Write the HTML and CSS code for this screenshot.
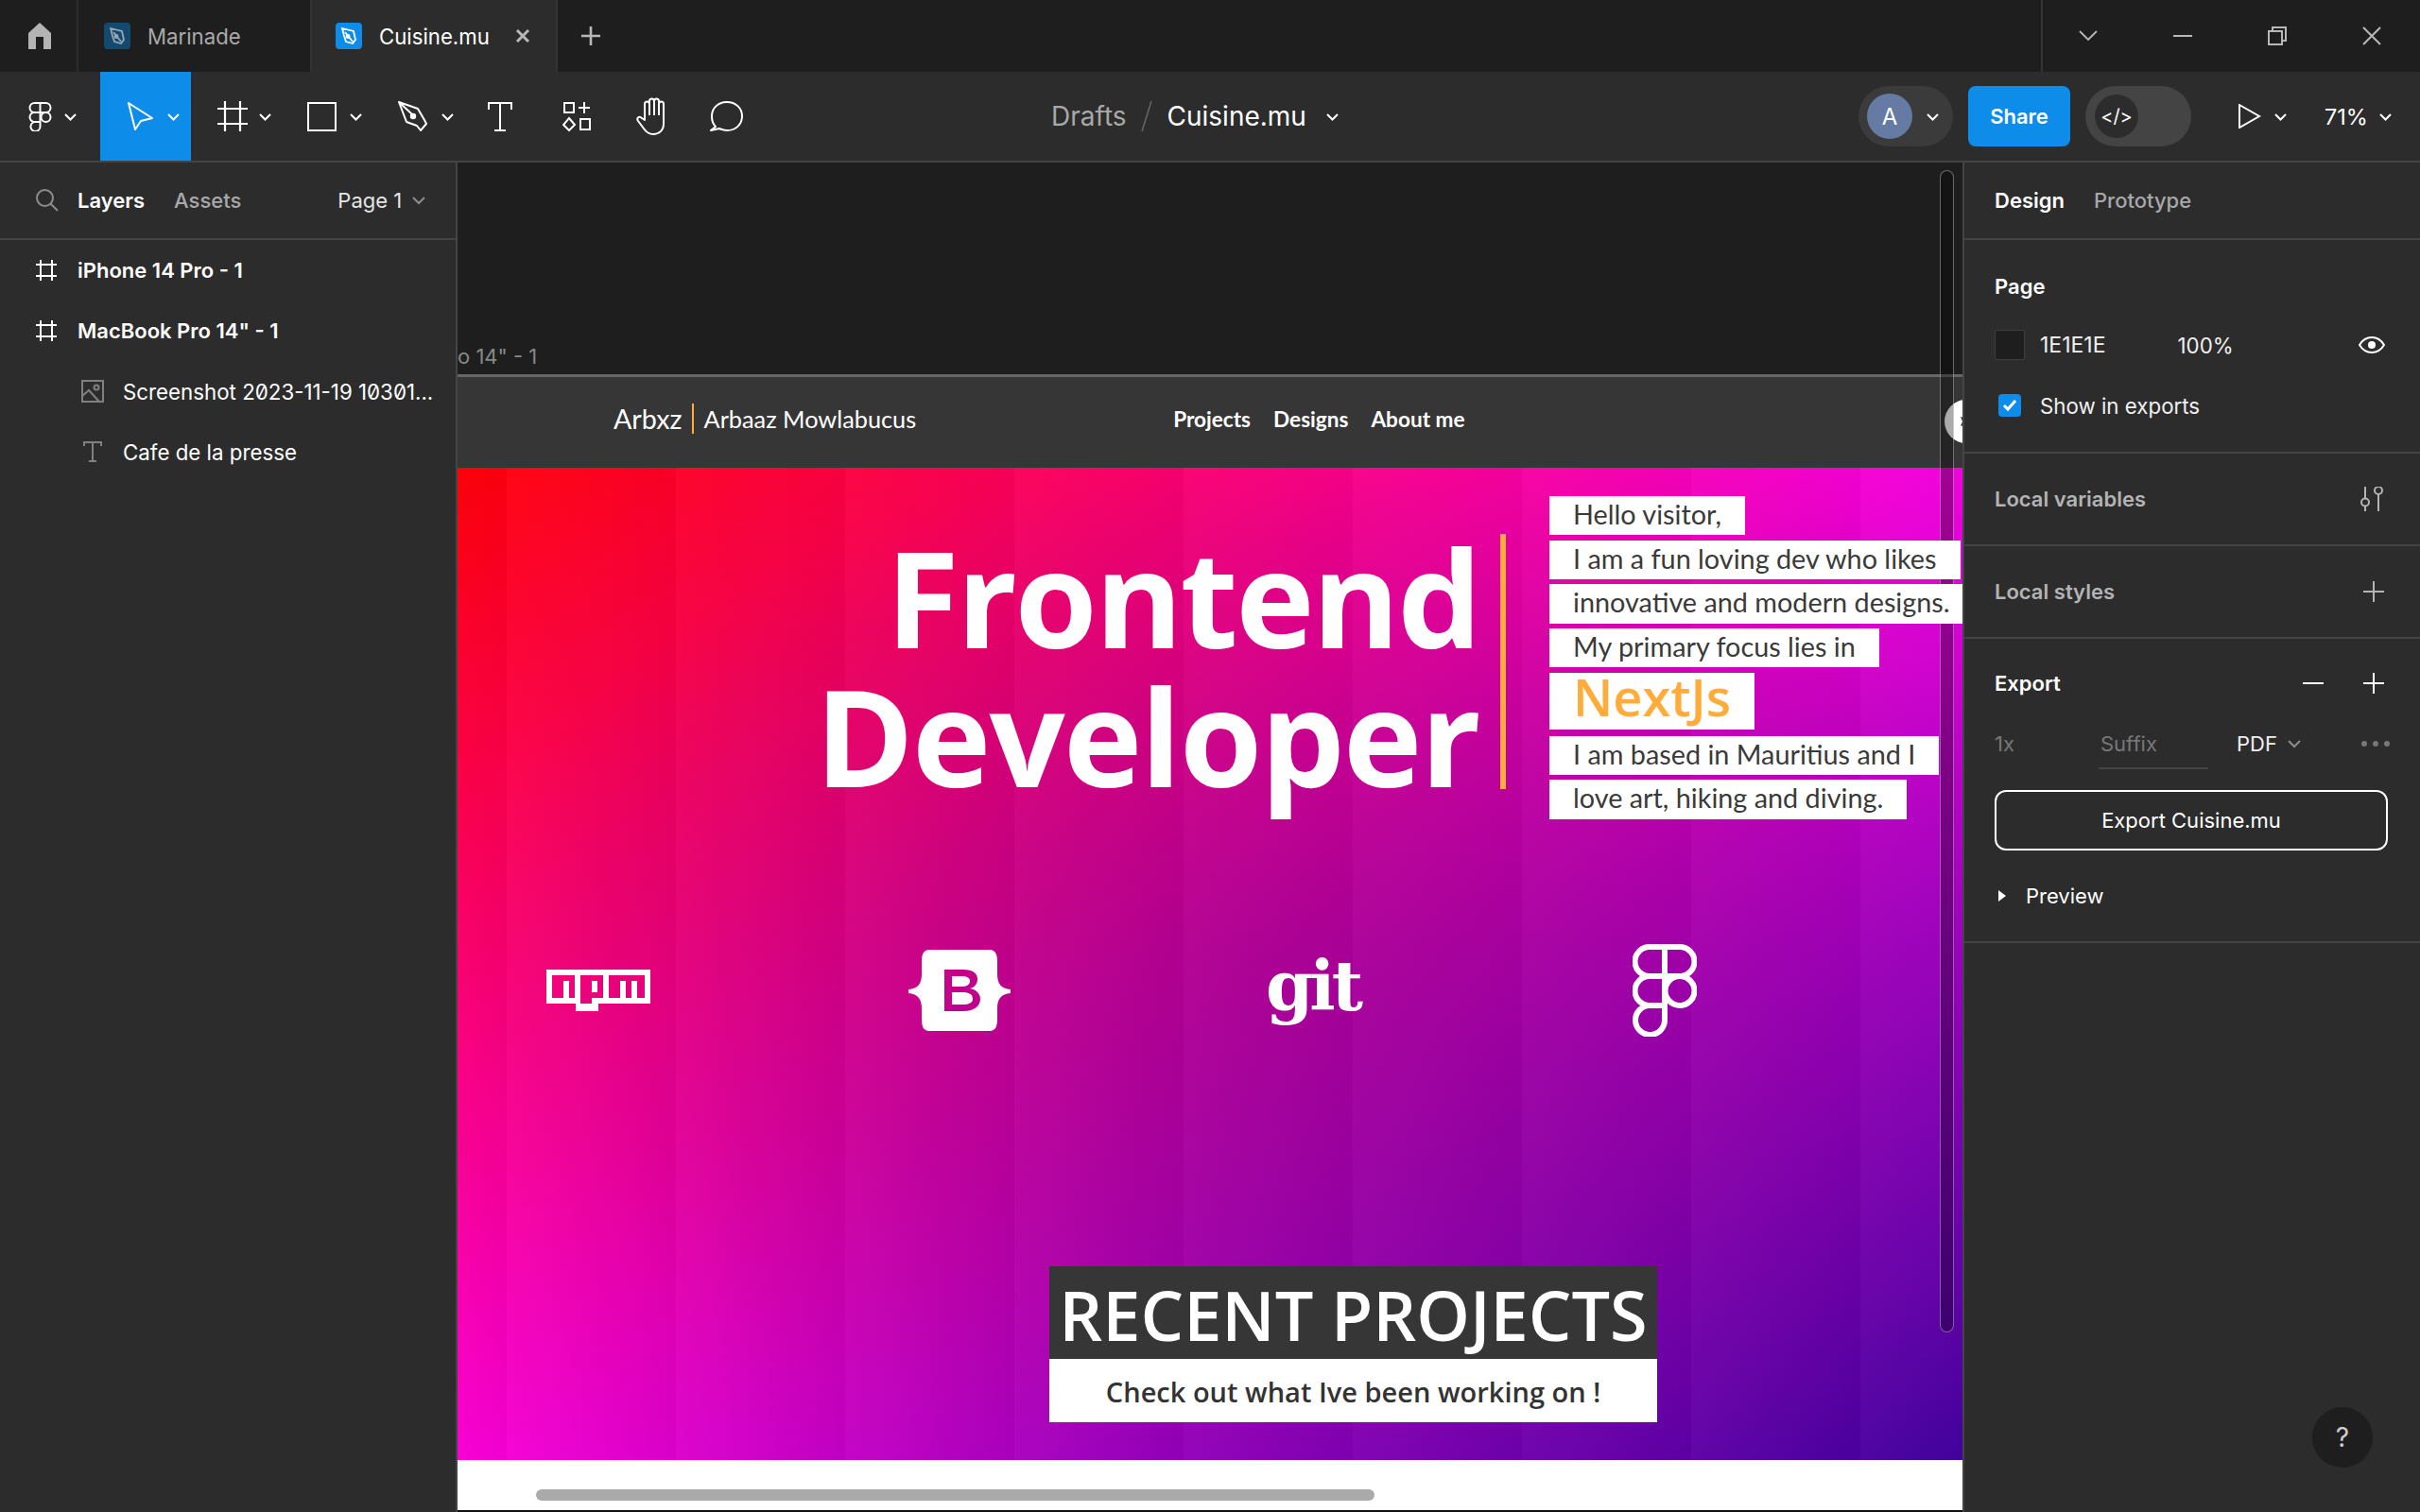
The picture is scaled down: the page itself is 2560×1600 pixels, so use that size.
FILE: index.html
```html
<!DOCTYPE html>
<html lang="en">
<head>
<meta charset="utf-8">
<title>Cuisine.mu</title>
<link rel="stylesheet" href="styles.css">
</head>
<body>
<div class="app">
  <header class="tabbar">
    <div class="home">
      <svg class="i" width="24" height="28" viewBox="0 0 24 28"><path d="M12 0 24 11V28H16V15H8V28H0V11Z" fill="#b4b4b4"/></svg>
    </div>
    <div class="tab tab-off">
      <span class="fileicon off"><svg width="28" height="28" viewBox="0 0 28 28"><path d="M7 6 19 9l2 9-3 4-7-2-2-6zM10 10l8 10M13 13a1.5 1.5 0 1 0 .1 0" fill="none" stroke="#9aa7b0" stroke-width="1.8"/></svg></span>
      <span class="tabname">Marinade</span>
    </div>
    <div class="tab tab-on">
      <span class="fileicon on"><svg width="28" height="28" viewBox="0 0 28 28"><path d="M7 6 19 9l2 9-3 4-7-2-2-6zM10 10l8 10M13 13a1.5 1.5 0 1 0 .1 0" fill="none" stroke="#fff" stroke-width="1.8"/></svg></span>
      <span class="tabname">Cuisine.mu</span>
      <svg class="tabx" width="16" height="16" viewBox="0 0 16 16"><path d="M2 2 14 14M14 2 2 14" stroke="#b8b8b8" stroke-width="3"/></svg>
    </div>
    <svg class="tabplus" width="20" height="20" viewBox="0 0 20 20"><path d="M10 0V20M0 10H20" stroke="#b8b8b8" stroke-width="2.6"/></svg>
    <div class="winbtns">
      <svg width="20" height="12" viewBox="0 0 20 12"><path d="M1 1 10 10 19 1" fill="none" stroke="#b8b8b8" stroke-width="1.8"/></svg>
      <svg width="20" height="4" viewBox="0 0 20 4"><path d="M0 2H20" stroke="#b8b8b8" stroke-width="2"/></svg>
      <svg width="20" height="20" viewBox="0 0 20 20"><path d="M5 4V1H19V15H15M1 5H15V19H1Z" fill="none" stroke="#b8b8b8" stroke-width="2"/></svg>
      <svg width="20" height="20" viewBox="0 0 20 20"><path d="M1 1 19 19M19 1 1 19" stroke="#b8b8b8" stroke-width="2"/></svg>
    </div>
  </header>

  <nav class="toolbar">
    <div class="tools">
      <div class="tool t-logo">
        <svg width="25" height="31" viewBox="0 0 25 31" fill="none" stroke="#fff" stroke-width="2"><path d="M12.5 1H6.5a5 5 0 0 0 0 10h6ZM12.5 1h6a5 5 0 0 1 0 10h-6ZM12.5 11H6.5a5 5 0 0 0 0 10h6ZM12.5 21H6.5a5 5 0 1 0 6 5Z"/><circle cx="18.5" cy="16" r="5"/></svg>
        <svg class="chev" width="13" height="8" viewBox="0 0 13 8"><path d="M1 1l5.500 5.500L12 1" fill="none" stroke="#fff" stroke-width="2"/></svg>
      </div>
      <div class="tool t-move">
        <svg width="27" height="30" viewBox="0 0 27 30"><path d="M1 1 26 17 14 20 8 29Z" fill="none" stroke="#fff" stroke-width="2" stroke-linejoin="round"/></svg>
        <svg class="chev" width="13" height="8" viewBox="0 0 13 8"><path d="M1 1l5.500 5.500L12 1" fill="none" stroke="#fff" stroke-width="2"/></svg>
      </div>
      <div class="tool t-frame">
        <svg width="32" height="32" viewBox="0 0 32 32"><path d="M8 0V32M24 0V32M0 8H32M0 24H32" stroke="#fff" stroke-width="2.200"/></svg>
        <svg class="chev" width="13" height="8" viewBox="0 0 13 8"><path d="M1 1l5.500 5.500L12 1" fill="none" stroke="#fff" stroke-width="2"/></svg>
      </div>
      <div class="tool t-rect">
        <svg width="31" height="31" viewBox="0 0 31 31"><rect x="1" y="1" width="29" height="29" fill="none" stroke="#fff" stroke-width="2"/></svg>
        <svg class="chev" width="13" height="8" viewBox="0 0 13 8"><path d="M1 1l5.500 5.500L12 1" fill="none" stroke="#fff" stroke-width="2"/></svg>
      </div>
      <div class="tool t-pen">
        <svg width="32" height="32" viewBox="0 0 32 32" fill="none" stroke="#fff" stroke-width="2" stroke-linejoin="round"><path d="M1 1 21 8 28 20 30 24 24 31 20 26 9 22ZM1 1 15 14"/><circle cx="16" cy="16" r="2.200" fill="#fff"/></svg>
        <svg class="chev" width="13" height="8" viewBox="0 0 13 8"><path d="M1 1l5.500 5.500L12 1" fill="none" stroke="#fff" stroke-width="2"/></svg>
      </div>
      <div class="tool t-solo">
        <svg width="26" height="31" viewBox="0 0 26 31"><path d="M1 8V1H25V8M13 1V30M7 30H19" fill="none" stroke="#fff" stroke-width="2"/></svg>
      </div>
      <div class="tool t-solo t-comp">
        <svg width="30" height="31" viewBox="0 0 30 31" fill="none" stroke="#fff" stroke-width="2"><rect x="2" y="1" width="10" height="10"/><path d="M23 0V12M17 6H29"/><path d="M7 17 13 24 7 30 1 24Z"/><rect x="19" y="18" width="10" height="11"/></svg>
      </div>
      <div class="tool t-solo t-hand">
        <svg width="34" height="40" viewBox="0 0 34 40"><path d="M9 24V7a2.500 2.500 0 0 1 5 0V4a2.500 2.500 0 0 1 5 0V4a2.500 2.500 0 0 1 5 0v3a2.500 2.500 0 0 1 5 0V28c0 7-5 11-11 11-5 0-8-3-10-6L2 25c-2-3 1-6 4-3Z M14 6V19M19 4V19M24 6V19" fill="none" stroke="#fff" stroke-width="2" stroke-linejoin="round"/></svg>
      </div>
      <div class="tool t-solo t-comment">
        <svg width="35" height="32" viewBox="0 0 35 32"><path d="M6 27C3 24 2 20 2 16 2 7 9 1 18 1s16 6 16 15-7 15-16 15c-3 0-6-1-8-2L1 31Z" fill="none" stroke="#fff" stroke-width="2" stroke-linejoin="round"/></svg>
      </div>
    </div>
    <div class="crumbs">
      <span class="crumb-dim">Drafts</span>
      <svg class="slash" width="12" height="32" viewBox="0 0 12 32"><path d="M11 0 1 32" stroke="#666" stroke-width="1.500"/></svg>
      <span class="crumb-file">Cuisine.mu</span>
      <svg class="chev" width="13" height="8" viewBox="0 0 13 8"><path d="M1 1l5.500 5.500L12 1" fill="none" stroke="#fff" stroke-width="2"/></svg>
    </div>
    <div class="actions">
      <div class="pill pill-user">
        <span class="avatar">A</span>
        <svg class="chev" width="13" height="8" viewBox="0 0 13 8"><path d="M1 1l5.500 5.500L12 1" fill="none" stroke="#fff" stroke-width="2"/></svg>
      </div>
      <button class="share">Share</button>
      <div class="pill pill-code"><span class="codeknob">&lt;/&gt;</span></div>
      <svg class="play" width="24" height="26" viewBox="0 0 24 26"><path d="M1 1 22 13 1 25Z" fill="none" stroke="#fff" stroke-width="2"/></svg>
      <svg class="chev" width="13" height="8" viewBox="0 0 13 8"><path d="M1 1l5.500 5.500L12 1" fill="none" stroke="#fff" stroke-width="2"/></svg>
      <span class="zoomval">71%</span>
      <svg class="chev" width="13" height="8" viewBox="0 0 13 8"><path d="M1 1l5.500 5.500L12 1" fill="none" stroke="#fff" stroke-width="2"/></svg>
    </div>
  </nav>

  <div class="workspace">
    <aside class="left">
      <div class="panelhead">
        <svg class="search" width="24" height="24" viewBox="0 0 24 24" fill="none" stroke="#8c8c8c" stroke-width="2"><circle cx="9.500" cy="9.500" r="8.500"/><path d="M15.500 15.500 23 23"/></svg>
        <span class="ltab ltab-on">Layers</span>
        <span class="ltab ltab-off">Assets</span>
        <span class="pagesel">Page 1</span>
        <svg class="pagechev" width="14" height="9" viewBox="0 0 14 9"><path d="M1 1l6 6 6-6" fill="none" stroke="#8c8c8c" stroke-width="2"/></svg>
      </div>
      <ul class="layers">
        <li class="layer frame-row">
          <svg width="24" height="24" viewBox="0 0 24 24"><path d="M6 1V23M18 1V23M1 6H23M1 18H23" stroke="#fff" stroke-width="2"/></svg>
          <span>iPhone 14 Pro - 1</span>
        </li>
        <li class="layer frame-row">
          <svg width="24" height="24" viewBox="0 0 24 24"><path d="M6 1V23M18 1V23M1 6H23M1 18H23" stroke="#fff" stroke-width="2"/></svg>
          <span>MacBook Pro 14" - 1</span>
        </li>
        <li class="layer child-row">
          <svg width="24" height="24" viewBox="0 0 24 24" fill="none" stroke="#808080" stroke-width="2"><rect x="1" y="1" width="22" height="22"/><circle cx="16" cy="8" r="2.500"/><path d="M1 17 8 11 19 23"/></svg>
          <span>Screenshot 2023-11-19 10301...</span>
        </li>
        <li class="layer child-row">
          <svg width="24" height="24" viewBox="0 0 24 24"><path d="M3 6V2H21V6M12 2V22M8 22H16" fill="none" stroke="#808080" stroke-width="2"/></svg>
          <span>Cafe de la presse</span>
        </li>
      </ul>
    </aside>

    <main class="canvas">
      <div class="framelabel">o 14" - 1</div>
      <div class="frame">
        <div class="sitenav">
          <div class="brand"><span class="brand-a">Arbxz</span><span class="brand-name">Arbaaz Mowlabucus</span></div>
          <div class="sitelinks"><span>Projects</span><span>Designs</span><span>About me</span></div>
          <div class="siteavatar">
            <svg width="12" height="16" viewBox="0 0 12 16"><path d="M6 0 8 4 12 3 10 8 12 13 8 12 6 16 4 12 0 13 2 8 0 3 4 4Z" fill="#333"/></svg>
          </div>
        </div>
        <section class="hero">
          <div class="herotop">
            <h1 class="headline"><span class="line-a">Frontend</span><span class="line-b">Developer</span></h1>
            <div class="herobar"></div>
            <div class="intro">
              <p>Hello visitor,</p>
              <p>I am a fun loving dev who likes</p>
              <p>innovative and modern designs.</p>
              <p>My primary focus lies in</p>
              <p class="next">NextJs</p>
              <p>I am based in Mauritius and I</p>
              <p>love art, hiking and diving.</p>
            </div>
          </div>
          <div class="logos">
            <svg width="110" height="44" viewBox="0 0 110 44"><path fill="#fff" fill-rule="evenodd" d="M0 0H110V36H55V44H31V36H0ZM6 6V30H18V12H24V30H30V6ZM36 6V36H48V30H60V6ZM48 12H54V24H48ZM66 6V30H78V12H84V30H90V12H96V30H104V6Z"/></svg>
            <svg width="108" height="86" viewBox="0 0 108 86"><path fill="#fff" fill-rule="evenodd" d="M22 0H86C92 0 94 5 94 12V26C94 36 98 41 108 42V46C98 47 94 52 94 62V74C94 81 92 86 86 86H22C16 86 14 81 14 74V62C14 52 10 47 0 46V42C10 41 14 36 14 26V12C14 5 16 0 22 0ZM38 21V65H58C70 65 76 59 76 52 76 46 71 42 65 41 70 40 73 36 73 31 73 25 68 21 58 21ZM46 28H56C62 28 65 30 65 33 65 37 62 39 55 39H46ZM46 45H57C64 45 68 47 68 52 68 56 64 58 57 58H46Z"/></svg>
            <span class="gitlogo">git</span>
            <svg width="68" height="98" viewBox="0 0 68 98" fill="none" stroke="#fff" stroke-width="6"><path d="M34 3H18a15.500 15.500 0 0 0 0 31H34ZM34 3H50a15.500 15.500 0 0 1 0 31H34ZM34 34H18a15.500 15.500 0 0 0 0 31H34ZM34 65H18A15.500 15.500 0 1 0 34 80Z"/><circle cx="50" cy="49.500" r="15.500"/></svg>
          </div>
          <div class="recent">
            <h2 class="recent-title">RECENT PROJECTS</h2>
            <p class="recent-sub">Check out what Ive been working on !</p>
          </div>
        </section>
        <div class="framebottom"><div class="hscroll"></div></div>
      </div>
      <div class="vscroll"></div>
    </main>

    <aside class="right">
      <div class="panelhead rhead">
        <span class="ltab ltab-on">Design</span>
        <span class="ltab ltab-off">Prototype</span>
      </div>
      <section class="rsec sec-page">
        <h3 class="sectitle">Page</h3>
        <div class="prow">
          <span class="swatch"></span>
          <span class="hex">1E1E1E</span>
          <span class="pct">100%</span>
          <svg class="eye" width="28" height="18" viewBox="0 0 28 18"><path d="M1 9C4 4 9 1 14 1s10 3 13 8c-3 5-8 8-13 8S4 14 1 9Z" fill="none" stroke="#fff" stroke-width="2"/><circle cx="14" cy="9" r="4" fill="#fff"/></svg>
        </div>
        <div class="prow">
          <span class="check"><svg width="16" height="14" viewBox="0 0 16 14"><path d="M2 7 6 11 14 2" fill="none" stroke="#fff" stroke-width="3"/></svg></span>
          <span class="showlabel">Show in exports</span>
        </div>
      </section>
      <section class="rsec sec-row">
        <h3 class="sectitle dim">Local variables</h3>
        <svg width="26" height="26" viewBox="0 0 26 26" fill="none" stroke="#b4b4b4" stroke-width="2"><path d="M6 0V12M6 21V26M20 8V26"/><circle cx="6" cy="16.500" r="4"/><circle cx="20" cy="4" r="4"/></svg>
      </section>
      <section class="rsec sec-row">
        <h3 class="sectitle dim">Local styles</h3>
        <svg width="22" height="22" viewBox="0 0 22 22"><path d="M11 0V22M0 11H22" stroke="#b4b4b4" stroke-width="2"/></svg>
      </section>
      <section class="rsec sec-export">
        <div class="exporthead">
          <h3 class="sectitle">Export</h3>
          <svg class="minus" width="22" height="22" viewBox="0 0 22 22"><path d="M0 11H22" stroke="#fff" stroke-width="2"/></svg>
          <svg width="22" height="22" viewBox="0 0 22 22"><path d="M11 0V22M0 11H22" stroke="#fff" stroke-width="2"/></svg>
        </div>
        <div class="exportrow">
          <span class="ex-scale">1x</span>
          <span class="ex-suffix">Suffix</span>
          <span class="ex-format">PDF</span>
          <svg class="pagechev" width="14" height="9" viewBox="0 0 14 9"><path d="M1 1l6 6 6-6" fill="none" stroke="#8c8c8c" stroke-width="2"/></svg>
          <svg class="dots" width="30" height="6" viewBox="0 0 30 6"><circle cx="3" cy="3" r="3" fill="#777"/><circle cx="15" cy="3" r="3" fill="#777"/><circle cx="27" cy="3" r="3" fill="#777"/></svg>
        </div>
        <button class="exportbtn">Export Cuisine.mu</button>
        <div class="preview">
          <svg width="8" height="12" viewBox="0 0 8 12"><path d="M0 0 8 6 0 12Z" fill="#fff"/></svg>
          <span>Preview</span>
        </div>
      </section>
      <div class="help">?</div>
    </aside>
  </div>
</div>
</body>
</html>
```
FILE: styles.css
```css
* { box-sizing: border-box; margin: 0; padding: 0; }
html, body { width: 2560px; height: 1600px; overflow: hidden; background: #1e1e1e; }
body { font-family: Inter, "Noto Sans", sans-serif; color: #fff; font-size: 22px; }
svg { display: block; flex: none; }
.app { width: 2560px; height: 1600px; display: flex; flex-direction: column; }

/* tab bar */
.tabbar { height: 76px; background: #1e1e1e; display: flex; align-items: stretch; }
.home { width: 83px; display: flex; align-items: center; padding-left: 30px; border-right: 2px solid #2c2c2c; }
.tab { display: flex; align-items: center; font-size: 22.200px; }
.tab-off { width: 245px; padding-left: 27px; color: #aaa; }
.tab-on { width: 262px; padding-left: 25px; background: #2c2c2c; border-left: 2px solid #333; border-right: 2px solid #333; }
.fileicon { width: 28px; height: 28px; border-radius: 4px; margin-right: 18px; }
.fileicon.off { background: #134a70; }
.fileicon.on { background: #0d8ce9; }
.tabx { margin-left: 27px; }
.tabplus { align-self: center; margin-left: 25px; }
.winbtns { margin-left: auto; width: 401px; border-left: 2px solid #333; display: flex; align-items: center; gap: 80px; padding-left: 38px; }

/* toolbar */
.toolbar { height: 96px; background: #2c2c2c; border-bottom: 2px solid #444; display: flex; align-items: stretch; }
.tools { display: flex; width: 1112px; align-items: stretch; }
.tool { display: flex; align-items: center; }
.t-logo { width: 106px; padding-left: 30px; gap: 13px; }
.t-move { width: 96px; padding-left: 29px; gap: 15px; background: #0d8ce9; }
.t-frame { width: 98px; padding-left: 28px; gap: 12px; }
.t-rect { width: 98px; padding-left: 25px; gap: 14px; }
.t-pen { width: 91px; padding-left: 23px; gap: 14px; }
.t-solo { width: 80px; justify-content: center; }
.t-comp { margin-left: 1px; }
.t-comment { margin-left: -2px; }
.chev { margin-top: 2px; }
.crumbs { width: 854px; display: flex; align-items: center; font-size: 28px; }
.crumb-dim { color: #a8a8a8; }
.slash { margin: 0 16px 0 15px; }
.crumb-file { margin-right: 21px; }
.actions { display: flex; align-items: center; }
.pill { height: 64px; border-radius: 32px; display: flex; align-items: center; }
.pill-user { width: 100px; background: #3b3b3b; padding-left: 9px; gap: 15px; }
.avatar { width: 48px; height: 48px; border-radius: 50%; background: #667ba3; display: flex; align-items: center; justify-content: center; font-size: 24px; }
.share { width: 108px; height: 64px; border: 0; border-radius: 8px; background: #0d8ce9; color: #fff; font: 600 22px Inter, sans-serif; margin-left: 16px; }
.pill-code { width: 112px; background: #444; margin-left: 16px; padding-left: 10px; }
.codeknob { width: 46px; height: 46px; border-radius: 50%; background: #2c2c2c; display: flex; align-items: center; justify-content: center; font-size: 20px; }
.play { margin-left: 50px; }
.actions > .chev { margin-left: 14px; }
.zoomval { margin-left: 40px; font-size: 23.500px; }
.actions > .chev:last-child { margin-left: 12px; }

/* workspace */
.workspace { flex: 1; display: flex; min-height: 0; }
.left { width: 482px; background: #2c2c2c; }
.right { width: 482px; background: #2c2c2c; position: relative; }
.panelhead { height: 82px; border-bottom: 2px solid #444; display: flex; align-items: center; }
.left .panelhead { padding-left: 38px; }
.search { margin-right: 20px; }
.ltab { font-size: 22px; }
.ltab-on { font-weight: 600; }
.ltab-off { color: #a8a8a8; font-weight: 500; margin-left: 31px; }
.pagesel { margin-left: 102px; color: #e6e6e6; }
.pagechev { margin-left: 11px; }
.layers { list-style: none; }
.layer { height: 64px; display: flex; align-items: center; font-size: 22px; }
.frame-row { padding-left: 37px; font-weight: 600; gap: 21px; }
.child-row { padding-left: 86px; gap: 20px; font-size: 22.300px; font-feature-settings: "zero"; white-space: nowrap; }

/* canvas */
.canvas { width: 1596px; position: relative; overflow: hidden; background: #1e1e1e; border-left: 2px solid #444; border-right: 2px solid #444; }
.framelabel { height: 224px; padding-top: 192px; color: #888; font-size: 22px; white-space: nowrap; line-height: 26px; }
.frame { width: 1592px; }
.sitenav { height: 99px; padding-bottom: 8px; background: #363636; border-top: 3px solid #666; display: flex; align-items: center; position: relative; }
.brand { margin-left: 165px; display: flex; align-items: center; font-family: Lato, sans-serif; color: #fff; }
.brand-a { font-size: 28.700px; padding-right: 10px; border-right: 2px solid #ffac3b; line-height: 32px; }
.brand-name { font-size: 25.300px; margin-left: 11px; }
.sitelinks { margin-left: 272px; display: flex; gap: 24px; font: 700 22.600px Lato, sans-serif; }
.siteavatar { position: absolute; left: 1573px; top: 24px; width: 46px; height: 46px; border-radius: 50%; background: #fff; display: flex; align-items: center; justify-content: center; }
.hero { height: 1050px; position: relative; background: linear-gradient(90deg, #ff0008, #f500e2); }
.hero::before { content: ""; position: absolute; inset: 0; background: linear-gradient(90deg, #fc00d8, #8e00b8 50%, #40009c); -webkit-mask-image: linear-gradient(#0000, #000); mask-image: linear-gradient(#0000, #000); }
.hero::after { content: ""; position: absolute; inset: 0; background: linear-gradient(90deg, rgba(255,255,255,.025), rgba(0,0,0,.025)) 52px 0 / 179px 100%, radial-gradient(ellipse 55% 50% at 55% 50%, rgba(110,0,140,.25), rgba(110,0,140,0)); }
.hero > * { position: relative; z-index: 1; }
.herotop { height: 377px; display: flex; justify-content: flex-end; }
.headline { font: 700 141px/147px "Open Sans", sans-serif; text-align: right; margin-top: 63px; white-space: nowrap; height: 294px; }
.line-a { display: block; letter-spacing: -2.500px; }
.line-b { display: block; letter-spacing: -1.700px; }
.herobar { width: 6px; height: 270px; background: #ffac3b; margin: 70px 46px 0 22px; }
.intro { width: 437px; padding-top: 30px; display: flex; flex-direction: column; align-items: flex-start; }
.intro p { height: 42px; margin-bottom: 5.400px; padding: 0 25px; background: #fff; color: #3a3a3a; font: 400 28.800px/38px Lato, sans-serif; white-space: nowrap; }
.intro .next { height: 61px; font: 600 54px/50px "Open Sans", sans-serif; color: #ffac3b; margin-bottom: 7px; }
.logos { display: grid; grid-template-columns: repeat(4, 383px); margin: 127px 0 0 94px; height: 98px; align-items: center; }
.gitlogo { font: 700 72px/86px "DejaVu Serif", "Liberation Serif", serif; color: #fff; letter-spacing: -4px; margin-left: -5px; padding-bottom: 8px; }
.recent { width: 643px; margin: 243px 0 0 626px; }
.recent-title { height: 98px; background: #363636; color: #fff; font: 600 72px/102px "Open Sans", sans-serif; text-align: center; white-space: nowrap; }
.recent-sub { height: 67px; background: #fff; color: #333; font: 600 29px/69px "Open Sans", sans-serif; text-align: center; white-space: nowrap; }
.framebottom { height: 55px; background: #fff; padding: 31px 0 0 83px; border-bottom: 2px solid #111; }
.hscroll { width: 887px; height: 12px; border-radius: 6px; background: #aaa; }
.vscroll { position: absolute; left: 1568px; top: 8px; width: 15px; height: 1230px; border-radius: 8px; background: rgba(0,0,0,.33); border: 1.500px solid rgba(255,255,255,.36); }

/* right panel */
.rhead { padding-left: 32px; }
.rsec { border-bottom: 2px solid #444; padding: 0 32px; }
.sectitle { font-size: 22px; font-weight: 600; }
.sectitle.dim { color: #b4b4b4; }
.sec-page { height: 226px; padding-top: 36px; }
.prow { height: 64px; display: flex; align-items: center; font-size: 22.300px; color: #f0f0f0; }
.sec-page .sectitle { height: 26px; margin-bottom: 17px; line-height: 26px; }
.swatch { width: 32px; height: 32px; background: #1e1e1e; border: 1.500px solid #3e3e3e; border-radius: 2px; }
.hex { margin-left: 16px; font-size: 23px; }
.pct { margin-left: 76px; font-size: 22.300px; }
.eye { margin-left: auto; margin-right: 5px; }
.check { width: 24px; height: 24px; margin: 0 4px; background: #0d8ce9; border-radius: 4px; display: flex; align-items: center; justify-content: center; }
.showlabel { margin-left: 16px; }
.sec-row { height: 98px; display: flex; align-items: center; justify-content: space-between; padding-right: 38px; }
.sec-export { height: 322px; padding-top: 35px; }
.exporthead { display: flex; align-items: center; height: 24px; padding-right: 6px; }
.exporthead .sectitle { margin-right: auto; }
.minus { margin-right: 42px; }
.exportrow { display: flex; align-items: center; height: 64px; margin-top: 20px; font-size: 22px; }
.ex-scale { color: #777; width: 112px; }
.ex-suffix { color: #777; width: 144px; position: relative; }
.ex-suffix::after { content: ""; position: absolute; left: -2px; bottom: -14px; width: 116px; height: 2px; background: #444; }
.ex-format { color: #f0f0f0; }
.dots { margin-left: auto; }
.exportbtn { width: 416px; height: 64px; display: block; margin-top: 17px; background: transparent; border: 2px solid #fff; border-radius: 12px; color: #fff; font: 400 22px Inter, sans-serif; }
.preview { display: flex; align-items: center; gap: 21px; height: 64px; margin: 16px 0 0 4px; font-size: 22px; }
.help { position: absolute; left: 368px; top: 1317px; width: 64px; height: 64px; border-radius: 50%; background: #1e1e1e; color: #ccc; font-size: 28px; display: flex; align-items: center; justify-content: center; }
```
